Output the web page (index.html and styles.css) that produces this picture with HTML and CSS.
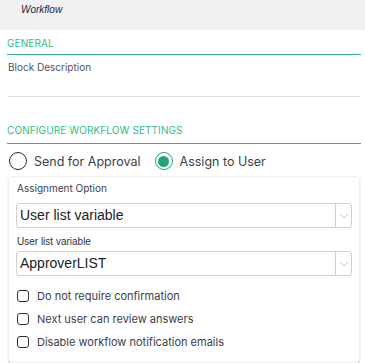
FILE: index.html
```html
<!DOCTYPE html>
<html>
<head>
<meta charset="utf-8">
<link rel="stylesheet" href="styles.css">
</head>
<body>
<div class="header"><span class="title">Workflow</span></div>
<div class="content">
  <div class="section-title">GENERAL</div>
  <div class="field-label">Block Description</div>
  <div class="text-input"></div>
  <div class="section-title configure">CONFIGURE WORKFLOW SETTINGS</div>
  <div class="radios">
    <label class="radio"><span class="circle"></span><span>Send for Approval</span></label>
    <label class="radio"><span class="circle checked"><span class="dot"></span></span><span>Assign to User</span></label>
  </div>
  <div class="card">
    <div class="card-label">Assignment Option</div>
    <div class="select"><span class="value">User list variable</span><span class="arrow"><svg width="10" height="6" viewBox="0 0 10 6"><path d="M1 1 L5 5 L9 1" fill="none" stroke="#c4c4c4" stroke-width="1"/></svg></span></div>
    <div class="card-label small">User list variable</div>
    <div class="select"><span class="value">ApproverLIST</span><span class="arrow"><svg width="10" height="6" viewBox="0 0 10 6"><path d="M1 1 L5 5 L9 1" fill="none" stroke="#c4c4c4" stroke-width="1"/></svg></span></div>
    <div class="checks">
      <label class="check"><span class="box"></span><span>Do not require confirmation</span></label>
      <label class="check"><span class="box"></span><span>Next user can review answers</span></label>
      <label class="check"><span class="box"></span><span>Disable workflow notification emails</span></label>
    </div>
  </div>
</div>
</body>
</html>
```
FILE: styles.css
```css
* { box-sizing: border-box; }
html, body { margin: 0; padding: 0; background: #fff; }
body { font-family: Inter, "Noto Sans", sans-serif; width: 365px; height: 363px; overflow: hidden; }
.header { height: 30px; background: #f0f0f0; padding: 3px 0 0 21px; font-size: 10px; line-height: 12px; }
.title { font-family: "Liberation Sans", Arial, sans-serif; font-style: italic; font-size: 10px; color: #1f2544; }
.content { padding: 0 4px 0 7px; }
.section-title { font-size: 10px; color: #2dbd86; letter-spacing: 0.1px; padding-top: 7px; height: 25px; border-bottom: 1px solid #2bb57c; }
.section-title.configure { margin-top: 22px; padding-top: 5px; height: 25px; }
.field-label { font-size: 10px; color: #4e5460; padding: 6px 0 0 1px; height: 27px; }
.text-input { height: 15px; border-bottom: 1px solid #dedede; margin: 0 1px; }
.radios { display: flex; gap: 14px; padding: 8px 0 0 2px; height: 32px; }
.radio { display: flex; align-items: center; gap: 7px; font-size: 12.5px; color: #3b3f48; height: 18px; }
.circle { width: 18px; height: 18px; border: 1.5px solid #262a33; border-radius: 50%; display: flex; align-items: center; justify-content: center; }
.circle.checked { border-color: #1ea676; }
.dot { width: 11px; height: 11px; border-radius: 50%; background: #1ea676; }
.card { margin: 0 1px; border: 1px solid #efefef; border-radius: 4px; box-shadow: 0 1px 1px rgba(0,0,0,0.35); padding: 5px 7px 10px 7px; height: 187px; }
.card-label { font-size: 10px; color: #3d414a; height: 21px; padding-left: 1px; }
.card-label.small { font-family: "Liberation Sans", Arial, sans-serif; font-size: 10px; color: #333; height: 23px; padding-top: 8px; }
.select { display: flex; height: 25px; border: 1px solid #cfcfcf; border-radius: 3px; }
.value { flex: 1; font-family: "Liberation Sans", Arial, sans-serif; font-size: 14px; color: #222; padding: 3px 0 0 3px; }
.arrow { width: 16px; border-left: 1px solid #cfcfcf; display: flex; align-items: center; justify-content: center; }
.checks { padding-top: 12px; display: flex; flex-direction: column; gap: 8px; }
.check { display: flex; align-items: center; gap: 8px; font-size: 11px; color: #3c4049; height: 15px; }
.box { width: 12px; height: 12px; border: 1.5px solid #2a2e36; border-radius: 3px; margin-left: 1px; }
```
